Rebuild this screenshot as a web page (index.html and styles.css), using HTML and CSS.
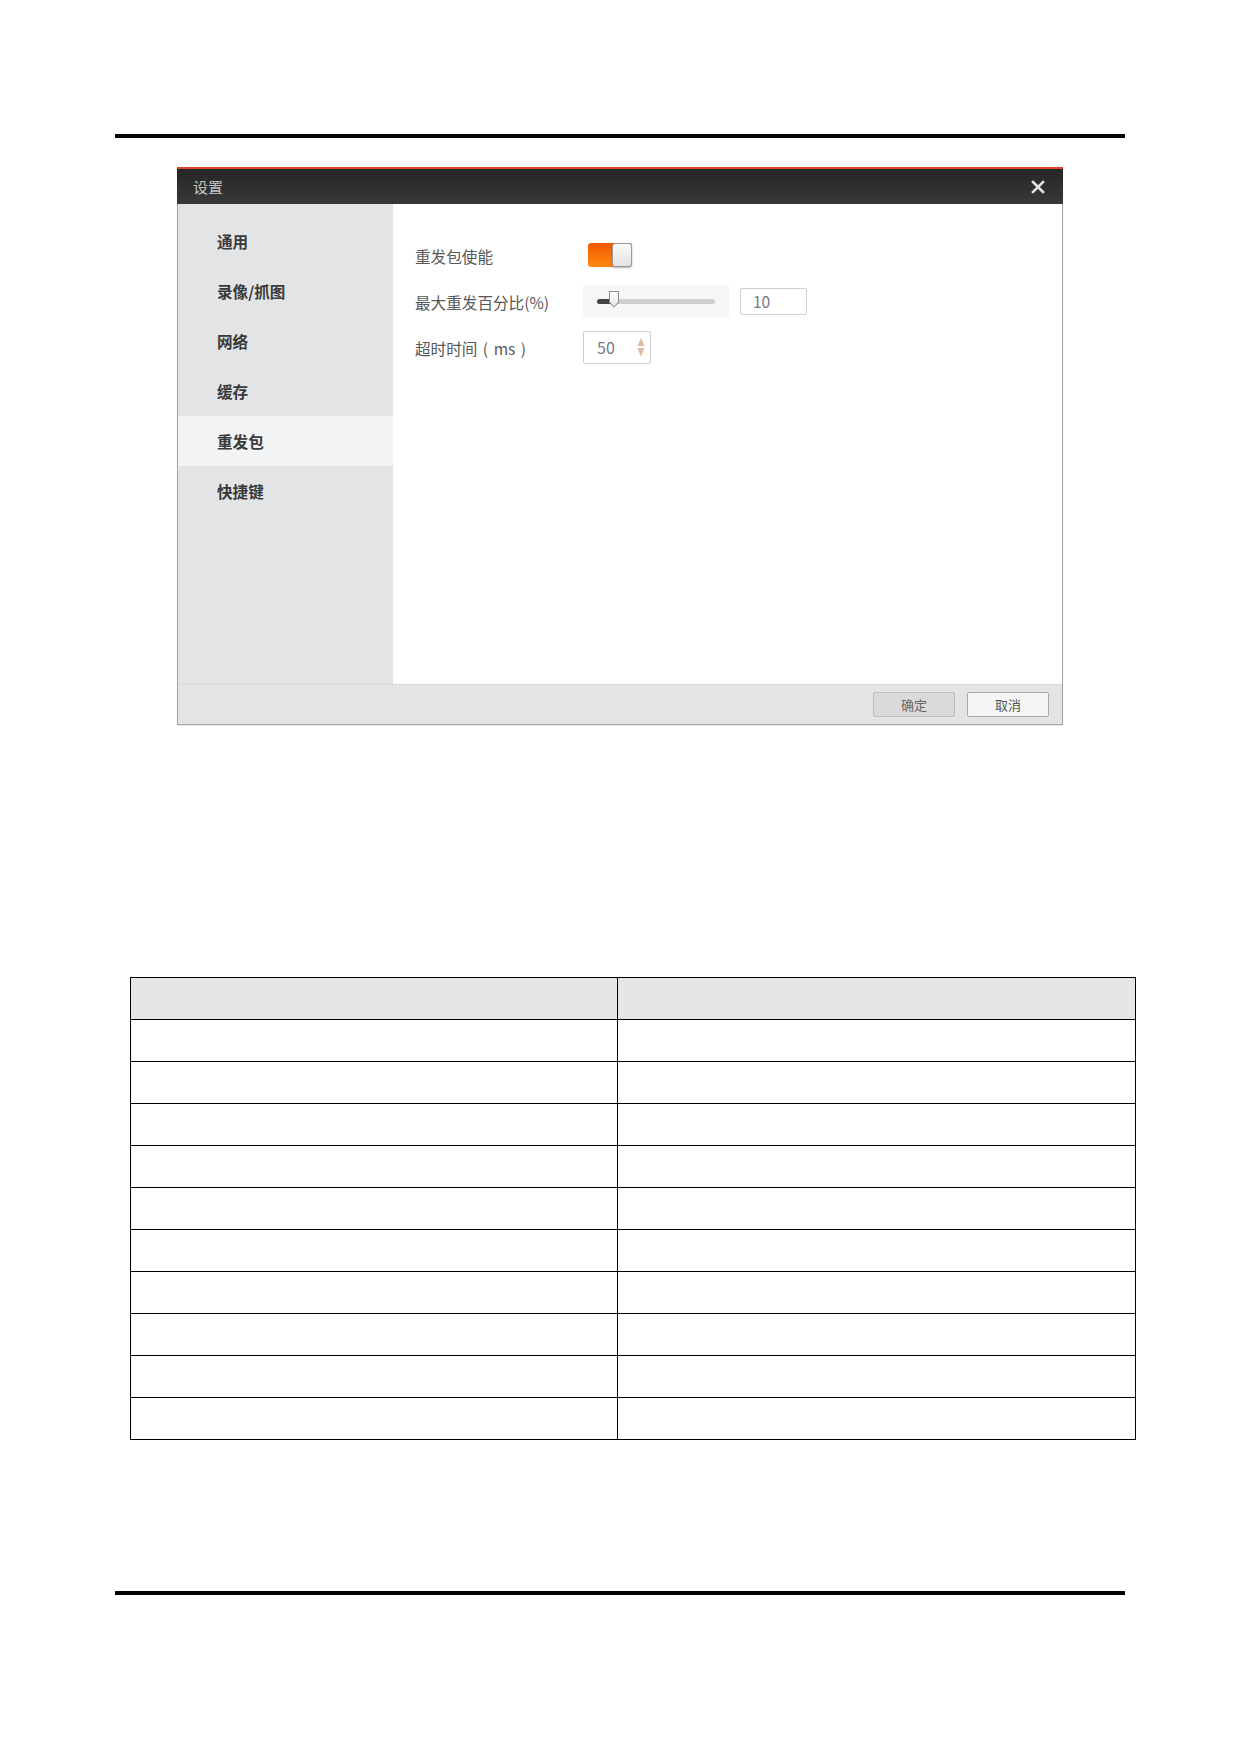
FILE: index.html
```html
<!DOCTYPE html>
<html lang="zh-CN">
<head>
  <meta charset="UTF-8">
  <title>设置 - 重发包</title>
  <link rel="stylesheet" href="styles.css">
</head>
<body>
  <div class="page">
    <div class="rule"></div>

    <div class="dialog">
      <div class="titlebar">
        <span class="title">设置</span>
        <span class="close">
          <svg width="14" height="14" viewBox="0 0 14 14">
            <path d="M2 2 L12 12 M12 2 L2 12" stroke="#e2e2e2" stroke-width="2.6" stroke-linecap="square" fill="none"/>
          </svg>
        </span>
      </div>

      <div class="dlg-body">
        <ul class="side">
          <li>通用</li>
          <li>录像/抓图</li>
          <li>网络</li>
          <li>缓存</li>
          <li class="active">重发包</li>
          <li>快捷键</li>
        </ul>

        <div class="panel">
          <div class="row">
            <span class="label">重发包使能</span>
            <div class="switch"><span class="knob"></span></div>
          </div>
          <div class="row">
            <span class="label">最大重发百分比(%)</span>
            <div class="slider">
              <div class="track">
                <div class="fill"></div>
                <span class="handle"></span>
              </div>
            </div>
            <div class="num-box">10</div>
          </div>
          <div class="row">
            <span class="label label-wide">超时时间 ( ms )</span>
            <div class="spin">
              <span class="spin-val">50</span>
              <span class="arrows">
                <svg width="8" height="24" viewBox="0 0 8 24">
                  <path d="M4 3 L7.5 11 L0.5 11 Z" fill="#dcbca6"/>
                  <path d="M4 22 L7.5 13 L0.5 13 Z" fill="#dcbca6"/>
                </svg>
              </span>
            </div>
          </div>
        </div>
      </div>

      <div class="footer">
        <button class="btn btn-ok">确定</button>
        <button class="btn">取消</button>
      </div>
    </div>

    <table class="grid">
      <tr class="head"><td></td><td></td></tr>
      <tr><td></td><td></td></tr>
      <tr><td></td><td></td></tr>
      <tr><td></td><td></td></tr>
      <tr><td></td><td></td></tr>
      <tr><td></td><td></td></tr>
      <tr><td></td><td></td></tr>
      <tr><td></td><td></td></tr>
      <tr><td></td><td></td></tr>
      <tr><td></td><td></td></tr>
      <tr><td></td><td></td></tr>
    </table>

    <div class="rule rule-bottom"></div>
  </div>
</body>
</html>
```

FILE: styles.css
```css
body {
  margin: 0;
  background: #fff;
  font-family: "Noto Sans CJK SC", "Noto Sans", sans-serif;
  color: #333;
}

.page {
  padding-top: 134px;
}

.rule {
  width: 1010px;
  height: 4px;
  margin-left: 115px;
  background: #000;
}

.rule-bottom {
  margin-top: 151px;
}

/* dialog */
.dialog {
  box-sizing: border-box;
  width: 886px;
  margin: 29px 0 0 177px;
  border: 1px solid #a3a3a3;
  border-top: 0;
  box-shadow: 0 1px 1px rgba(0, 0, 0, 0.08);
}

.titlebar {
  height: 35px;
  margin: 0 -1px;
  border-top: 2px solid #d8452a;
  background: linear-gradient(#262626, #383838);
  display: flex;
  align-items: center;
  justify-content: space-between;
  padding: 0 18px 0 16px;
}

.title {
  font-size: 15px;
  color: #c4c4c4;
}

.close {
  display: flex;
}

.dlg-body {
  display: flex;
  height: 480px;
}

.side {
  list-style: none;
  margin: 0;
  padding: 12px 0 0;
  width: 215px;
  background: #e3e4e6;
}

.side li {
  height: 50px;
  line-height: 50px;
  padding-left: 39px;
  font-size: 15.6px;
  font-weight: bold;
  color: #3a3a3a;
}

.side li:first-child {
  margin-bottom: 0;
}

.side li.active {
  background: #f2f3f5;
}

.panel {
  flex: 1;
  padding: 28px 0 0 22px;
  background: #fff;
}

.row {
  display: flex;
  align-items: center;
  height: 46px;
}

.label {
  width: 168px;
  font-size: 15.6px;
  color: #585858;
  padding-top: 2px;
}

.label-wide {
  word-spacing: 2px;
}

.switch {
  display: flex;
  width: 44px;
  height: 24px;
  margin-left: 5px;
  border-radius: 3px;
  background: linear-gradient(#f55800, #ff8a10);
  justify-content: flex-end;
}

.knob {
  box-sizing: border-box;
  width: 20px;
  height: 24px;
  border: 1px solid #9a9a9a;
  border-radius: 3px;
  background: linear-gradient(#fafafa, #e2e2e2);
  box-shadow: 0 1px 2px rgba(0, 0, 0, 0.3);
}

.slider {
  display: flex;
  align-items: center;
  width: 146px;
  height: 32px;
  padding-left: 14px;
  box-sizing: border-box;
  background: #f7f7f7;
}

.track {
  position: relative;
  width: 118px;
  height: 5px;
  border-radius: 3px;
  background: #cfcfcf;
}

.fill {
  width: 16px;
  height: 5px;
  border-radius: 3px 0 0 3px;
  background: #444;
}

.handle {
  position: absolute;
  left: 12px;
  top: -8px;
  width: 10px;
  height: 17px;
  background: #8d8d8d;
  clip-path: polygon(0 0, 100% 0, 100% 70%, 50% 100%, 0 70%);
}

.handle::after {
  content: "";
  position: absolute;
  left: 1px;
  top: 1px;
  width: 8px;
  height: 15px;
  background: linear-gradient(#fff, #e4e4e4);
  clip-path: polygon(0 0, 100% 0, 100% 70%, 50% 100%, 0 70%);
}

.num-box {
  box-sizing: border-box;
  width: 67px;
  height: 27px;
  margin-left: 11px;
  padding-left: 12px;
  border: 1px solid #cfcfcf;
  border-radius: 2px;
  font-size: 15.5px;
  line-height: 25px;
  color: #707a86;
}

.spin {
  box-sizing: border-box;
  display: flex;
  align-items: center;
  justify-content: space-between;
  width: 68px;
  height: 33px;
  padding: 0 5px 0 13px;
  border: 1px solid #cfcfcf;
  border-radius: 2px;
}

.spin-val {
  font-size: 16px;
  color: #6b7b92;
}

.arrows {
  display: flex;
}

.footer {
  display: flex;
  justify-content: flex-end;
  gap: 12px;
  height: 40px;
  box-sizing: border-box;
  padding: 7px 13px 0 0;
  border-top: 1px solid #d9dadc;
  background: #e3e4e6;
}

.btn {
  width: 82px;
  height: 25px;
  padding: 0;
  border: 1px solid #a9a9a9;
  border-radius: 2px;
  background: #f4f5f7;
  font-family: "Noto Sans CJK SC", sans-serif;
  font-size: 13px;
  color: #555;
}

.btn-ok {
  background: #dadada;
  border-color: #bdbdbd;
  color: #666;
}

/* table */
.grid {
  width: 1006px;
  margin: 252px 0 0 130px;
  border-collapse: collapse;
}

.grid td {
  height: 41px;
  padding: 0;
  border: 1px solid #000;
}

.grid td:first-child {
  width: 486px;
}

.grid .head td {
  background: #e6e6e6;
}
```
